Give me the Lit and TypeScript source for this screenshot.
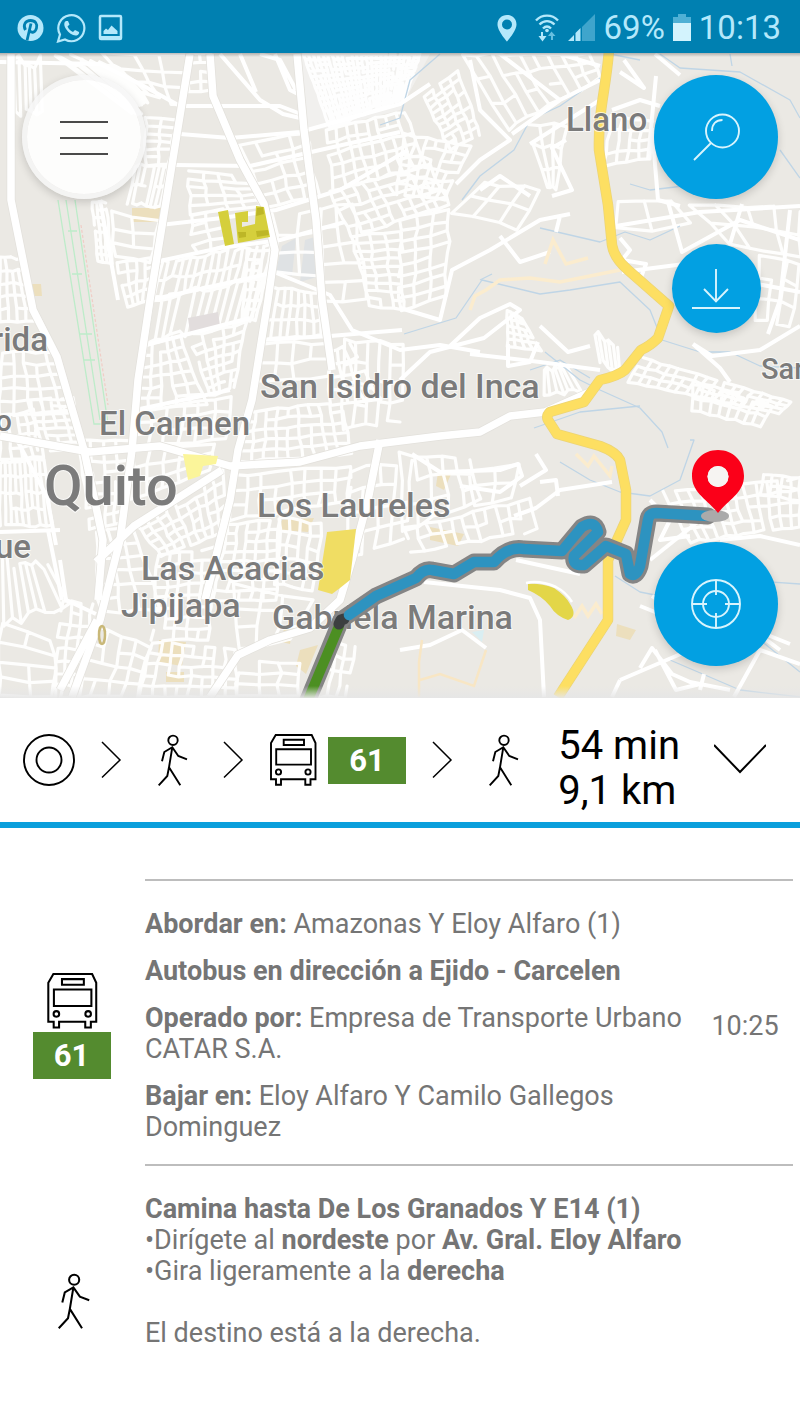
import { LitElement, html, svg, css } from "lit";
import { customElement, property } from "lit/decorators.js";

type Patch = [number, number, number, number, number, number, number, number, number, number];

/* Street blocks: four corners (clockwise from top left), then columns and rows. */
const PATCHES: Patch[] = [
  [14, 62, 40, 62, 42, 115, 16, 115, 5, 1],
  [64, 62, 120, 68, 147, 100, 130, 112, 14, 1],
  [72, 54, 190, 54, 180, 106, 140, 92, 4, 3],
  [146, 118, 178, 120, 168, 165, 146, 165, 2, 6],
  [136, 165, 168, 168, 160, 206, 128, 202, 7, 2],
  [188, 54, 210, 54, 212, 90, 188, 92, 2, 4],
  [240, 146, 306, 132, 318, 196, 266, 208, 4, 5],
  [303, 54, 420, 54, 405, 98, 330, 128, 24, 13],
  [326, 130, 405, 112, 425, 165, 334, 190, 8, 5],
  [330, 192, 430, 165, 450, 205, 352, 236, 9, 5],
  [188, 170, 246, 178, 264, 206, 190, 214, 4, 5],
  [92, 202, 106, 202, 112, 264, 98, 262, 3, 8],
  [110, 212, 158, 222, 152, 262, 116, 258, 2, 3],
  [116, 262, 156, 256, 148, 300, 128, 308, 4, 4],
  [190, 216, 222, 208, 228, 246, 196, 254, 2, 4],
  [162, 262, 272, 244, 264, 278, 154, 298, 15, 2],
  [154, 298, 262, 280, 250, 318, 146, 344, 13, 1],
  [248, 250, 272, 250, 256, 320, 242, 320, 3, 7],
  [274, 216, 320, 208, 320, 276, 276, 274, 2, 3],
  [272, 286, 318, 292, 322, 334, 262, 340, 7, 3],
  [322, 210, 352, 204, 368, 300, 322, 300, 2, 5],
  [352, 236, 400, 232, 404, 310, 370, 306, 3, 9],
  [400, 220, 450, 210, 445, 296, 400, 310, 3, 8],
  [146, 346, 180, 336, 206, 406, 134, 410, 5, 6],
  [190, 338, 246, 322, 234, 388, 210, 396, 5, 7],
  [262, 344, 326, 342, 330, 378, 256, 382, 4, 2],
  [0, 258, 22, 258, 36, 322, 0, 322, 4, 5],
  [2, 352, 56, 352, 74, 410, 0, 415, 5, 5],
  [30, 400, 72, 398, 84, 450, 38, 450, 4, 7],
  [0, 416, 34, 410, 44, 456, 0, 460, 4, 4],
  [0, 462, 44, 458, 52, 526, 0, 526, 9, 4],
  [78, 440, 130, 440, 122, 522, 90, 530, 4, 8],
  [136, 524, 222, 470, 228, 530, 162, 556, 9, 5],
  [134, 450, 215, 444, 210, 470, 130, 500, 5, 3],
  [136, 412, 232, 396, 226, 440, 132, 446, 6, 3],
  [232, 476, 350, 466, 350, 500, 230, 520, 8, 3],
  [246, 412, 340, 402, 352, 454, 238, 462, 9, 5],
  [345, 340, 404, 344, 400, 420, 342, 430, 5, 4],
  [330, 350, 350, 345, 380, 400, 330, 405, 3, 4],
  [228, 524, 280, 520, 276, 600, 214, 600, 5, 8],
  [280, 518, 322, 524, 312, 590, 274, 584, 4, 5],
  [350, 470, 412, 462, 404, 540, 346, 560, 4, 4],
  [96, 532, 134, 528, 160, 610, 100, 612, 3, 6],
  [158, 556, 214, 548, 208, 640, 152, 640, 5, 8],
  [152, 642, 236, 650, 236, 697, 140, 697, 8, 5],
  [2, 560, 48, 566, 70, 604, 4, 622, 8, 1],
  [0, 624, 52, 640, 56, 697, 0, 697, 2, 4],
  [62, 600, 92, 604, 80, 697, 52, 697, 3, 8],
  [96, 626, 150, 646, 138, 697, 76, 697, 4, 4],
  [236, 586, 310, 600, 290, 640, 238, 650, 3, 3],
  [240, 660, 300, 664, 300, 697, 236, 697, 3, 3],
  [328, 640, 356, 648, 346, 697, 318, 697, 3, 4],
  [400, 455, 470, 460, 480, 500, 404, 530, 5, 3],
  [470, 470, 522, 464, 510, 500, 476, 506, 2, 2],
  [404, 528, 530, 500, 536, 530, 412, 552, 11, 2],
  [424, 96, 458, 70, 480, 134, 450, 150, 4, 9],
  [462, 54, 590, 54, 600, 78, 508, 130, 9, 3],
  [404, 134, 470, 146, 444, 200, 396, 194, 6, 6],
  [526, 122, 566, 126, 556, 188, 548, 190, 3, 3],
  [484, 182, 540, 190, 520, 230, 452, 212, 3, 2],
  [507, 311, 522, 318, 540, 350, 508, 346, 4, 5],
  [594, 332, 618, 346, 620, 372, 600, 362, 5, 1],
  [544, 370, 566, 366, 582, 392, 544, 394, 6, 1],
  [642, 358, 790, 402, 780, 414, 628, 382, 16, 3],
  [694, 384, 772, 406, 760, 426, 692, 410, 8, 2],
  [612, 116, 652, 122, 650, 158, 604, 166, 4, 4],
  [620, 204, 668, 200, 690, 226, 618, 230, 2, 1],
  [690, 204, 800, 210, 800, 256, 730, 244, 4, 2],
  [760, 256, 800, 262, 790, 328, 754, 320, 3, 3],
  [664, 492, 800, 478, 800, 526, 690, 542, 12, 4],
  [764, 474, 800, 478, 800, 500, 760, 496, 4, 2],
];

/* Main avenues in white, thick first. */
const AVENUES = [
  "M11 54V200L33 310 57 357 84 450 103 540 98 600",
  "M190 54 163 220 150 300 138 380 132 450 120 540 100 620 72 697",
  "M210 54 213 96 240 160 264 204 275 250 268 300 252 400 238 450 230 500 205 600",
  "M297 54 304 130 316 220 322 300 332 370",
  "M210 697 238 655 270 640 310 628 340 600 352 560 368 500 380 440",
  "M0 436 90 452 160 446 230 466 300 462 360 446 440 436 480 432 510 416 545 412 590 392",
  "M96 562 134 526 222 470M97 620 60 690",
];

const STREETS = [
  "M0 62 100 64 140 84 180 106 280 106 306 116",
  "M180 134 230 138 300 132 400 104 430 84",
  "M175 165 250 166 320 150 400 132",
  "M160 225 222 218 276 210 340 190 408 150",
  "M155 262 220 248 280 240 345 222",
  "M150 300 250 278 274 272 330 295 352 330 400 350 440 345 480 352",
  "M146 345 250 318M135 410 230 390 M262 340 330 336 402 330",
  "M220 54 260 100 283 114 300 118M240 54 256 92M275 54 290 90 300 95M260 54 280 60 296 90",
  "M48 530 62 600M17 440 47 497 56 545",
  "M100 200 118 300M60 560 66 600 96 614M0 532 60 530",
  "M400 380 430 352 484 338 520 310 510 304 480 318 450 346",
  "M540 326 568 352 590 346 M470 354 540 362 600 370",
  "M508 344 508 366 530 362 538 342",
  "M400 308 440 320 452 270 490 250 540 220 570 214M556 232 560 216 M500 236 520 262 550 252",
  "M560 54 600 66M530 144 600 100 M512 134 560 100 600 80M500 54 560 100",
  "M470 60 480 110 510 140 480 160 456 184M480 190 500 176 530 196 M552 196 572 190 552 148 566 140",
  "M612 110 640 100 660 106M620 72 644 88 624 60M655 54 680 75 M652 128 658 200 680 206",
  "M656 76 648 160 M616 226 700 212 800 206M622 272 700 262 M620 238 630 250 622 260 646 264 640 280",
  "M668 202 682 252 740 220 800 240M730 244 742 204M736 280 800 292M790 210 780 300 768 334",
  "M693 344 712 356 760 350 800 326M693 344 720 368 730 382",
  "M412 454 440 472 500 470 518 464 522 476 500 492 460 486M536 454 546 470 520 486M540 482 556 480 558 496",
  "M514 516 536 508 560 490 612 482M516 560 580 574",
  "M650 560 700 520M652 596 682 614M640 606 700 630 690 650 620 680M620 680 612 697M640 668 652 648 672 674 690 682 730 690M655 650 676 690 700 684",
  "M704 674 700 690M740 620 780 650M765 634 790 644M734 697 760 650 800 664",
  "M424 582 500 590 530 598 540 620 544 697",
  "M400 650 430 645 462 630 486 648",
  "M650 500 670 520 660 540 690 536M720 540 760 536 800 545",
];

const CREEKS = [
  "M440 54 410 80 400 118 380 125",
  "M600 78 560 106 530 120 514 150 480 176 462 200",
  "M660 54 680 68 740 72 790 100 800 118",
  "M730 54 732 66 M780 150 800 178 M610 54 640 60",
  "M404 334 456 318 482 280 540 294 570 290 620 282 650 310 662 340 700 352 730 352 760 366 800 368",
  "M540 228 600 242 625 232 650 240 680 226M630 184 650 190 700 184",
  "M480 280 492 274M545 352 580 380 600 390 640 408 662 432 668 448",
  "M530 370 560 360 590 378M534 428 580 412 640 406",
  "M560 462 590 480 620 492 650 496 680 480 694 440 690 440",
  "M615 576 640 592 670 598M740 580 800 584M680 630 760 640 800 672",
  "M670 660 740 690 800 697",
];

const TRUNK =
  "M609 50C606 90 598 110 599 150L608 205 612 245Q614 258 628 270L669 306 658 338Q650 346 641 350L625 370Q618 376 600 380L584 402 550 412Q546 416 548 420L557 434 600 446Q616 452 620 460L626 490V520L608 560V620L558 697";
const WALK_ROUTE =
  "M341 620 376 596 416 578Q424 568 432 570L454 574 474 562 494 562Q508 546 524 549L562 551 582 527Q595 519 598 532L574 556Q572 566 584 565L606 546 626 554 630 574Q636 578 640 566L648 520Q649 513 656 513L708 516";

function makeRandom(seed: number): () => number {
  let s = seed;
  return () => {
    s = (s * 16807) % 2147483647;
    return s / 2147483647;
  };
}

/* Streets of one block, with slightly uneven spacing and a few missing pieces. */
function blockPath(p: Patch, seed: number): string {
  const rnd = makeRandom(seed * 7919 + 13);
  const [ax, ay, bx, by, cx, cy, dx, dy, cols, rows] = p;
  const pts: string[][] = [];
  for (let r = 0; r <= rows; r++) {
    const row: string[] = [];
    for (let c = 0; c <= cols; c++) {
      const u = (c + (rnd() - 0.5) * 0.25) / cols;
      const v = (r + (rnd() - 0.5) * 0.25) / rows;
      const x = (1 - v) * ((1 - u) * ax + u * bx) + v * ((1 - u) * dx + u * cx);
      const y = (1 - v) * ((1 - u) * ay + u * by) + v * ((1 - u) * dy + u * cy);
      row.push(`${x.toFixed(1)} ${y.toFixed(1)}`);
    }
    pts.push(row);
  }
  let d = "";
  for (let r = 0; r <= rows; r++) {
    for (let c = 0; c <= cols; c++) {
      if (c < cols && rnd() > 0.12) d += `M${pts[r][c]}L${pts[r][c + 1]}`;
      if (r < rows && rnd() > 0.08) d += `M${pts[r][c]}L${pts[r + 1][c]}`;
    }
  }
  return d;
}

const BLOCKS = PATCHES.map((p, i) => blockPath(p, i + 1)).join("");

const PLACES: Array<{ name: string; x: number; y: number; kind: string }> = [
  { name: "Llano", x: 566, y: 131, kind: "area" },
  { name: "San Isidro del Inca", x: 260, y: 398, kind: "wide" },
  { name: "El Carmen", x: 99, y: 435, kind: "area" },
  { name: "Quito", x: 44, y: 505, kind: "city" },
  { name: "Los Laureles", x: 257, y: 517, kind: "wide" },
  { name: "Las Acacias", x: 141, y: 580, kind: "wide" },
  { name: "Jipijapa", x: 121, y: 617, kind: "wide" },
  { name: "Gabriela Marina", x: 272, y: 629, kind: "wide" },
  { name: "rida", x: 48, y: 351, kind: "area end" },
  { name: "o", x: 12, y: 431, kind: "small end" },
  { name: "ue", x: 31, y: 558, kind: "area end" },
  { name: "San", x: 761, y: 379, kind: "small" },
];

@customElement("line-icon")
class LineIcon extends LitElement {
  @property() name = "";

  static styles = css`
    :host { display: block; flex: none; width: 52px; height: 52px; }
    .glyph { display: block; width: 100%; height: 100%; fill: none; stroke: currentColor; stroke-width: 1.9; }
  `;

  private shape() {
    switch (this.name) {
      case "origin":
        return svg`<circle cx="26" cy="26" r="25"/><circle cx="26" cy="26" r="12.500"/>`;
      case "next":
        return svg`<path d="M18 8 36 26 18 43.500" stroke-width="1.500"/>`;
      case "walk":
        return svg`<circle cx="28" cy="6.300" r="4.700"/><path d="M27.300 13.300 24 33.300 22.300 42 13.700 51.300M24 33.300 35.300 51.300M17 27.300 19.300 18 27.300 13.300 33.300 22 42 25.300"/>`;
      case "bus":
        return svg`<path d="M8.700 1H44.700L48.500 9V45.300H43.500V50.700H38.300V45.300H14V50.700H9V45.300H4V9Z"/><path d="M16.700 5.700H37V11H16.700ZM9.200 15.300H44V30.600H9.200Z"/><circle cx="11.500" cy="38" r="2.600"/><circle cx="41" cy="38" r="2.600"/>`;
      case "expand":
        return svg`<path d="M0 11 26 38 52 11" stroke-width="2"/>`;
      case "menu":
        return svg`<path d="M2 11H50M2 27H50M2 43H50" stroke-width="2.200"/>`;
      case "search":
        return svg`<circle cx="32.500" cy="20" r="16.500"/><path d="M21 32 4 49M22 20C22 13 26 9 32.500 9"/>`;
      case "download":
        return svg`<path d="M26 6V38M14 26 26 38.500 38 26M2 45H50"/>`;
      case "locate":
        return svg`<circle cx="26" cy="26" r="24"/><circle cx="26" cy="26" r="13"/><path d="M26 2V17M26 35V50M2 26H17M35 26H50"/>`;
    }
    return null;
  }

  render() {
    return html`<svg class="glyph" viewBox="0 0 52 52" aria-hidden="true">${this.shape()}</svg>`;
  }
}

@customElement("status-bar")
class StatusBar extends LitElement {
  static styles = css`
    :host { display: flex; align-items: center; justify-content: space-between; height: 53px; padding: 2px 19px 0 16px; box-sizing: border-box;
      background: #0080b1; color: #b4e8fb; font: 400 33px/51px Roboto, sans-serif; }
    .group { display: flex; align-items: center; }
    .alerts { gap: 11px; }
    .icon { display: block; flex: none; }
    .signals { gap: 8px; }
    .signals .pin { margin-right: 8px; }
  `;

  render() {
    return html`
      <div class="group alerts">
        <svg class="icon" width="29" height="30" viewBox="0 0 29 30"><circle cx="14.500" cy="15" r="13" fill="#b4e8fb"/><path d="M11 27.500 15 10.500M9.500 17C6.500 12 9.500 7.500 14.500 7.500 19.500 7.500 21.500 11 20.500 15 19.500 19.500 15.500 20.500 13.500 17.500" fill="none" stroke="#0080b1" stroke-width="2.800"/></svg>
        <svg class="icon" width="31" height="30" viewBox="0 0 31 30"><path d="M2 28.500 4 21.500A13 13 0 1 1 9 26.500Z" fill="none" stroke="#b4e8fb" stroke-width="2.200"/><path d="M10 8C8 9 7.500 12 10 16 13 20.500 17 23 20.500 22.500 22.500 22 23.500 20 23 19L19 17 17 19C14.500 18 12.500 16 11.500 13.500L13.500 11.500 12 8Z" fill="#b4e8fb"/></svg>
        <svg class="icon" width="26" height="28" viewBox="0 0 26 28"><rect x="2" y="2" width="21" height="23" rx="1" fill="none" stroke="#b4e8fb" stroke-width="2.500"/><path d="M2 24H23" stroke="#b4e8fb" stroke-width="4"/><path d="M5.500 20V17L8 14.500 10 16 13.500 11.500 19.500 17V20Z" fill="#b4e8fb"/></svg>
      </div>
      <div class="group signals">
        <svg class="icon pin" width="22" height="28" viewBox="0 0 22 28"><path fill-rule="evenodd" d="M11 1C5.500 1 1.500 5 1.500 10.500 1.500 17 11 27.500 11 27.500S20.500 17 20.500 10.500C20.500 5 16.500 1 11 1ZM11 5.500A5 5 0 1 1 11 15.500 5 5 0 1 1 11 5.500Z" fill="#b4e8fb"/></svg>
        <svg class="icon" width="26" height="30" viewBox="0 0 26 30"><g fill="none" stroke="#b4e8fb" stroke-width="2.400"><path d="M2 7.500C8 1 18 1 24 7.500M5.500 11.500C10 7 16 7 20.500 11.500M9 15.500C11.500 13 14.500 13 17 15.500"/></g><circle cx="13" cy="17.500" r="1.800" fill="#b4e8fb"/><path d="M9 19V23H12.500L8.500 28.500 4.500 23H7V19Z" fill="#b4e8fb"/><path d="M17 27V23H14L17.500 18.500 21.500 23H19V27Z" fill="#66bfe0"/></svg>
        <svg class="icon" width="28" height="27" viewBox="0 0 28 27"><path d="M27 0V27H14V13Z" fill="#3fa5cc"/><path d="M6 21V27H0ZM12.500 14V27H7.500V19Z" fill="#b4e8fb"/></svg>
        <span>69%</span>
        <svg class="icon" width="18" height="27" viewBox="0 0 18 27"><path d="M0 9V3H5V0H13V3H18V9Z" fill="#4fb0d5"/><path d="M0 9H18V27H0Z" fill="#d3f3fd"/></svg>
        <span>10:13</span>
      </div>`;
  }
}

@customElement("route-map")
class RouteMap extends LitElement {
  static styles = css`
    :host { display: block; position: relative; overflow: hidden; font-family: Roboto, sans-serif; }
    .canvas { display: block; width: 100%; height: auto; background: #ebe9e4; }
    .blocks { fill: none; stroke: #fff; stroke-width: 3.2; stroke-linecap: round; opacity: .92; }
    .casing { fill: none; stroke: #e3e1dc; stroke-width: 9; }
    .avenue { fill: none; stroke: #fff; stroke-width: 7.5; stroke-linejoin: round; }
    .street { fill: none; stroke: #fff; stroke-width: 4; stroke-linejoin: round; }
    .creek { fill: none; stroke: #bfd5e6; stroke-width: 1.3; stroke-linejoin: round; }
    .place { fill: #7b7b7b; stroke: rgba(255, 255, 255, .7); stroke-width: 2; paint-order: stroke; font-weight: 500; }
    .area { font-size: 33px; }
    .wide { font-size: 34px; }
    .small { font-size: 29px; }
    .city { font-size: 56px; }
    .end { text-anchor: end; }
    .route { fill: none; stroke-linecap: round; stroke-linejoin: round; }
    .menu, .tools { position: absolute; top: 22px; }
    .menu { left: 22px; }
    .tools { right: 22px; bottom: 32px; display: flex; flex-direction: column; align-items: center; gap: 45px; }
    .round { display: grid; place-items: center; width: 124px; height: 124px; padding: 0; border: 0; border-radius: 50%;
      background: #02a0e2; color: #d8f4fd; box-shadow: 0 3px 8px rgba(0, 0, 0, .16); }
    .menu { background: rgba(255, 255, 255, .88); color: #4a4a4a; border: 5px solid rgba(246, 246, 246, .85); background-clip: padding-box; }
    .compact { width: 89px; height: 89px; }
    .locate { margin-top: auto; }
  `;

  render() {
    return html`
      <svg class="canvas" viewBox="0 53 800 645" role="img" aria-label="Quito">
        <defs>
          <linearGradient id="edge" x1="0" y1="0" x2="0" y2="1">
            <stop offset="0" stop-color="#e6e6e6" stop-opacity="0"/>
            <stop offset="1" stop-color="#e6e6e6" stop-opacity=".95"/>
          </linearGradient>
          <linearGradient id="top" x1="0" y1="0" x2="0" y2="1">
            <stop offset="0" stop-color="#777" stop-opacity=".5"/>
            <stop offset="1" stop-color="#777" stop-opacity="0"/>
          </linearGradient>
        </defs>
        <path d="M400 54H300V130L330 128 400 110 430 54Z" fill="#f1f0ee"/>
        <path d="M282 246 296 238 292 276 276 270ZM305 240 318 236 320 276 300 282Z" fill="#dfe2e4"/>
        <path d="M132 208H162V222H132ZM30 284 41 284 42 296 32 296ZM159 640 186 642 182 666 158 662ZM166 672H184V682H166ZM282 520 314 518 308 532 280 530ZM284 628 292 630 290 644 282 642ZM300 650 318 645 306 674 296 666ZM430 527 464 534 458 546 430 540ZM438 472 452 472 444 490 436 486ZM617 624 636 630 630 640 616 636Z" fill="#ecdfbd"/>
        <path class="blocks" d=${BLOCKS}/>
        <path d="M188 318 218 312 220 326 190 332Z" fill="#e2dddd"/>
        ${CREEKS.map((d) => svg`<path class="creek" d=${d}/>`)}
        ${STREETS.map((d) => svg`<path class="street" d=${d}/>`)}
        ${AVENUES.map((d) => svg`<path class="casing" d=${d}/>`)}
        ${AVENUES.map((d) => svg`<path class="avenue" d=${d}/>`)}
        <path d="M58 200 94 424H108L75 200M68 231H77M72 274H82M80 334H92M84 360H95M66 200 100 420" fill="none" stroke="#bdecc9" stroke-width="1.300"/>
        <path d="M81 225 108 405" fill="none" stroke="#f0cdc6" stroke-width="1.200" stroke-dasharray="3 2"/>
        <path d="M470 310 475 296 486 290 500 280 530 278 560 282 600 274 620 270M545 264 553 240 566 264 588 258M576 454 588 466 594 456 610 476 612 466M574 618 582 606 588 616 596 604 602 614" fill="none" stroke="#fbecce" stroke-width="3.500"/>
        <path d="M419 697V662L422 640M420 680 440 674 474 686 486 650" fill="none" stroke="#f8e6c4" stroke-width="2.500"/>
        <path d="M218 212 228 210 234 244 225 246ZM235 213 248 211V222L242 222V227L255 224 256 206 264 207 270 237 238 243Z" fill="#d5cf3c"/>
        <path d="M257 208 263 207 264 214 256 216ZM238 232H246V237L239 238ZM256 231 268 230 269 235 257 237Z" fill="#bdb627"/>
        <path d="M183 454 218 456 216 464 203 466 200 476 188 480Z" fill="#fbf59a"/>
        <path d="M327 532 356 529 350 580 340 588 332 594 318 590Z" fill="#f0dd63"/>
        <path d="M528 584Q540 583 554 588 566 596 570 604 578 616 568 620 556 616 550 606 542 596 528 590Z" fill="#e3d648"/>
        <path d="M526 583Q540 580 556 587 566 592 572 602" fill="none" stroke="#fff" stroke-width="2.500"/>
        <ellipse cx="102" cy="635" rx="3" ry="9" fill="none" stroke="#c9b878" stroke-width="2.500"/>
        <path d="M472 632 484 630 482 642Z" fill="#d9eef2"/>
        <path d=${TRUNK} fill="none" stroke="#ecd475" stroke-width="10.500" stroke-linejoin="round"/>
        <path d=${TRUNK} fill="none" stroke="#fddf62" stroke-width="9" stroke-linejoin="round"/>
        ${PLACES.map((p) => svg`<text class="place ${p.kind}" x=${p.x} y=${p.y}>${p.name}</text>`)}
        <path class="route" d="M341 620 308 700" stroke="#858585" stroke-width="17"/>
        <path class="route" d=${WALK_ROUTE} stroke="#858585" stroke-width="17"/>
        <path class="route" d="M339 626 308 700" stroke="#4c8f22" stroke-width="10"/>
        <path class="route" d="M344 619 341 620 339 624" stroke="#3c3f40" stroke-width="11"/>
        <path class="route" d=${WALK_ROUTE.replace("M341 620", "M349 615")} stroke="#2d93c0" stroke-width="10.500"/>
        <ellipse cx="715" cy="516" rx="14" ry="6" fill="#aaa"/>
        <path fill-rule="evenodd" d="M718 450C703 450 692 461 692 476 692 493 708 500 718 513 728 500 744 493 744 476 744 461 733 450 718 450ZM718 466A10.500 10.500 0 1 1 718 487 10.500 10.500 0 1 1 718 466Z" fill="#fb0019"/>
        <circle cx="718" cy="476.500" r="10.500" fill="#f6f4f2"/>
        <rect x="0" y="53" width="800" height="4" fill="url(#top)"/>
        <rect x="0" y="686" width="800" height="12" fill="url(#edge)"/>
      </svg>
      <button class="round menu" aria-label="Menú"><line-icon name="menu"></line-icon></button>
      <div class="tools">
        <button class="round" aria-label="Buscar"><line-icon name="search"></line-icon></button>
        <button class="round compact" aria-label="Descargar"><line-icon name="download"></line-icon></button>
        <button class="round locate" aria-label="Mi ubicación"><line-icon name="locate"></line-icon></button>
      </div>`;
  }
}

@customElement("app-root")
class AppRoot extends LitElement {
  static styles = css`
    :host { display: block; min-height: 100vh; background: #fff; color: #757575; font: 400 27px/31px Roboto, sans-serif; }
    .summary { display: flex; align-items: center; padding: 0 34px 0 23px; height: 124px; border-bottom: 6px solid #0b9fdc; color: #000; }
    .steps { display: flex; flex: 1; align-items: center; gap: 9px; margin: 0; padding: 0; list-style: none; }
    .line { display: grid; place-items: center; width: 78px; height: 47px; background: #548b2f; color: #fff; font-weight: 700; font-size: 31px; }
    .total { display: grid; margin-right: 34px; padding-top: 15px; font-size: 40px; line-height: 45px; white-space: nowrap; }
    .expand { padding: 0; border: 0; background: none; color: #000; }
    .legs { padding: 51px 7px 0 0; }
    .leg { display: grid; grid-template-columns: 145px 1fr; }
    .mode { display: grid; justify-items: center; align-content: center; gap: 3px; padding: 8px 2px 0 0; color: #000; }
    .mode line-icon { width: 56px; height: 56px; }
    .body { display: grid; grid-template-columns: 1fr 96px; align-items: center; border-top: 2px solid #bdbdbd; padding: 28px 0 21px; }
    .text { display: grid; gap: 16px; }
    .text p { margin: 0; }
    .time { justify-self: center; }
    .walk .mode { padding-top: 16px; }
    .walk .body { padding-bottom: 73px; }
    .walk .text { gap: 0; }
    .walk .last { margin-top: 31px; }
  `;

  render() {
    return html`
      <status-bar></status-bar>
      <route-map></route-map>
      <section class="summary">
        <ol class="steps">
          <li><line-icon name="origin"></line-icon></li>
          <li><line-icon name="next"></line-icon></li>
          <li><line-icon name="walk"></line-icon></li>
          <li><line-icon name="next"></line-icon></li>
          <li><line-icon name="bus"></line-icon></li>
          <li class="line">61</li>
          <li><line-icon name="next"></line-icon></li>
          <li><line-icon name="walk"></line-icon></li>
        </ol>
        <div class="total"><span>54 min</span><span>9,1 km</span></div>
        <button class="expand" aria-label="Mostrar detalles"><line-icon name="expand"></line-icon></button>
      </section>
      <main class="legs">
        <article class="leg">
          <div class="mode"><line-icon name="bus"></line-icon><span class="line">61</span></div>
          <div class="body">
            <div class="text">
              <p><b>Abordar en:</b> Amazonas Y Eloy Alfaro (1)</p>
              <p><b>Autobus en dirección a Ejido - Carcelen</b></p>
              <p><b>Operado por:</b> Empresa de Transporte Urbano CATAR S.A.</p>
              <p><b>Bajar en:</b> Eloy Alfaro Y Camilo Gallegos Dominguez</p>
            </div>
            <time class="time">10:25</time>
          </div>
        </article>
        <article class="leg walk">
          <div class="mode"><line-icon name="walk"></line-icon></div>
          <div class="body">
            <div class="text">
              <p><b>Camina hasta De Los Granados Y E14 (1)</b></p>
              <p>•Dirígete al <b>nordeste</b> por <b>Av. Gral. Eloy Alfaro</b></p>
              <p>•Gira ligeramente a la <b>derecha</b></p>
              <p class="last">El destino está a la derecha.</p>
            </div>
          </div>
        </article>
      </main>`;
  }
}
